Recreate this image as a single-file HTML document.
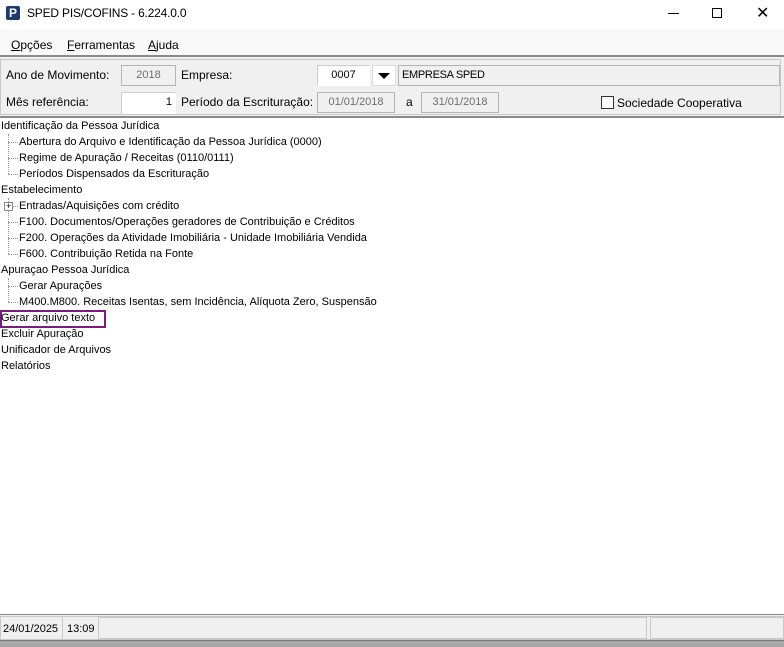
<!DOCTYPE html>
<html><head><meta charset="utf-8"><style>
*{margin:0;padding:0;box-sizing:border-box}
body{width:784px;height:647px;background:#fff;font-family:"Liberation Sans",sans-serif;position:relative;overflow:hidden;color:#000}
.a{position:absolute;white-space:nowrap}
.lbl{font-size:12px}
.box{position:absolute;border:1px solid #b4b4b4;background:#f0f0f0;color:#6d6d6d;font-size:11px;line-height:19px;text-align:center}
.wbox{position:absolute;border:1px solid #ccc;border-bottom-color:#fff;border-right-color:#fff;background:#fff;font-size:11px;line-height:19px}
.t{position:absolute;font-size:11px;line-height:16px;white-space:nowrap}
.h{position:absolute;left:8px;width:10px;border-top:1px dotted #999}
.v{position:absolute;left:8px;width:0;border-left:1px dotted #999}
</style></head><body>
<div class="a" style="left:6px;top:6px;width:14px;height:14px;background:#1e3a6e;border-radius:2px;color:#fff;font:bold 12px/14px 'Liberation Sans';text-align:center">P</div>
<div class="a" style="left:27px;top:6px;font-size:12px;letter-spacing:-0.2px">SPED PIS/COFINS - 6.224.0.0</div>
<div class="a" style="left:668px;top:13px;width:11px;border-top:1px solid #000"></div>
<div class="a" style="left:712px;top:8px;width:10px;height:10px;border:1px solid #000"></div>
<div class="a" style="left:756px;top:3px;font-size:16px">✕</div>
<div class="a" style="left:0;top:29px;width:784px;height:26px;background:#f9f9f9"></div>
<div class="a" style="left:11px;top:38px;font-size:12px"><u>O</u>pções</div>
<div class="a" style="left:67px;top:38px;font-size:12px"><u>F</u>erramentas</div>
<div class="a" style="left:148px;top:38px;font-size:12px"><u>A</u>juda</div>
<div class="a" style="left:0;top:55px;width:784px;height:63px;background:#f0f0f0;border-top:2px solid #8a8a8a;border-bottom:2px solid #8a8a8a"></div>
<div class="a" style="left:0;top:59px;width:781px;height:56px;border:1px solid #c8c8c8"></div>
<div class="a lbl" style="left:6px;top:68px">Ano de Movimento:</div>
<div class="box" style="left:121px;top:65px;width:55px;height:21px">2018</div>
<div class="a lbl" style="left:181px;top:68px">Empresa:</div>
<div class="wbox" style="left:317px;top:65px;width:53px;height:21px;text-align:center">0007</div>
<div class="a" style="left:372px;top:65px;width:24px;height:21px;background:#fff;border:1px solid #ddd"></div>
<div class="a" style="left:378px;top:73px;width:0;height:0;border-left:6px solid transparent;border-right:6px solid transparent;border-top:6px solid #000"></div>
<div class="box" style="left:398px;top:65px;width:382px;height:21px;color:#000;text-align:left;padding-left:3px;font-size:11px;letter-spacing:-0.3px">EMPRESA SPED</div>
<div class="a lbl" style="left:6px;top:95px">Mês referência:</div>
<div class="wbox" style="left:121px;top:92px;width:55px;height:22px;text-align:right;padding-right:3px">1</div>
<div class="a lbl" style="left:181px;top:95px">Período da Escrituração:</div>
<div class="box" style="left:317px;top:92px;width:78px;height:21px">01/01/2018</div>
<div class="a lbl" style="left:406px;top:95px">a</div>
<div class="box" style="left:421px;top:92px;width:78px;height:21px">31/01/2018</div>
<div class="a" style="left:601px;top:96px;width:13px;height:13px;border:1px solid #333;background:#fff"></div>
<div class="a lbl" style="left:617px;top:96px">Sociedade Cooperativa</div>
<div class="t" style="left:1px;top:118px">Identificação da Pessoa Jurídica</div>
<div class="v" style="top:134px;height:40px"></div>
<div class="h" style="top:142px"></div><div class="t" style="left:19px;top:134px">Abertura do Arquivo e Identificação da Pessoa Jurídica (0000)</div>
<div class="h" style="top:158px"></div><div class="t" style="left:19px;top:150px">Regime de Apuração / Receitas (0110/0111)</div>
<div class="h" style="top:174px"></div><div class="t" style="left:19px;top:166px">Períodos Dispensados da Escrituração</div>
<div class="t" style="left:1px;top:182px">Estabelecimento</div>
<div class="v" style="top:198px;height:56px"></div>
<div class="h" style="top:206px"></div>
<div class="a" style="left:4px;top:202px;width:9px;height:9px;border:1px solid #888;background:#fff;font:9px/7px 'Liberation Sans';text-align:center">+</div>
<div class="t" style="left:19px;top:198px">Entradas/Aquisições com crédito</div>
<div class="h" style="top:222px"></div><div class="t" style="left:19px;top:214px">F100. Documentos/Operações geradores de Contribuição e Créditos</div>
<div class="h" style="top:238px"></div><div class="t" style="left:19px;top:230px">F200. Operações da Atividade Imobiliária - Unidade Imobiliária Vendida</div>
<div class="h" style="top:254px"></div><div class="t" style="left:19px;top:246px">F600. Contribuição Retida na Fonte</div>
<div class="t" style="left:1px;top:262px">Apuraçao Pessoa Jurídica</div>
<div class="v" style="top:278px;height:24px"></div>
<div class="h" style="top:286px"></div><div class="t" style="left:19px;top:278px">Gerar Apurações</div>
<div class="h" style="top:302px"></div><div class="t" style="left:19px;top:294px">M400.M800. Receitas Isentas, sem Incidência, Alíquota Zero, Suspensão</div>
<div class="a" style="left:0;top:310px;width:106px;height:18px;border:2px solid #7d1a7d"></div>
<div class="t" style="left:1px;top:310px">Gerar arquivo texto</div>
<div class="t" style="left:1px;top:326px">Excluir Apuração</div>
<div class="t" style="left:1px;top:342px">Unificador de Arquivos</div>
<div class="t" style="left:1px;top:358px">Relatórios</div>
<div class="a" style="left:0;top:614px;width:784px;height:33px;background:#f0f0f0;border-top:1px solid #888"></div>
<div class="a" style="left:0;top:616px;width:784px;height:24px;border:1px solid #c8c8c8"></div>
<div class="a" style="left:3px;top:623px;font-size:11px">24/01/2025</div>
<div class="a" style="left:62px;top:617px;height:22px;border-left:1px solid #c8c8c8"></div>
<div class="a" style="left:67px;top:623px;font-size:11px">13:09</div>
<div class="a" style="left:98px;top:617px;width:549px;height:22px;border:1px solid #c8c8c8"></div>
<div class="a" style="left:650px;top:617px;width:134px;height:22px;border:1px solid #c8c8c8"></div>
<div class="a" style="left:0;top:640px;width:784px;height:7px;background:#a8a8a8;border-top:1px solid #777"></div>
</body></html>
